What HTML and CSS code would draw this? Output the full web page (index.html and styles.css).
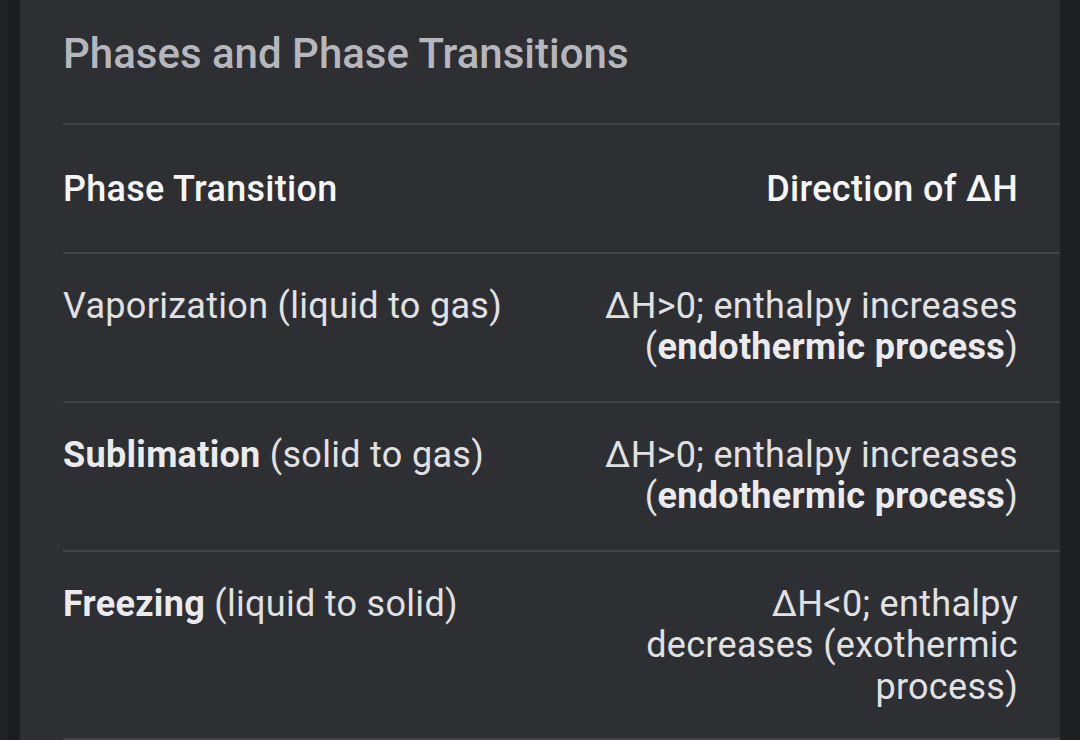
FILE: index.html
```html
<!DOCTYPE html>
<html>
<head>
<meta charset="utf-8">
<link rel="stylesheet" href="styles.css">
</head>
<body>
<div class="page">
  <div class="edge"></div>
  <div class="gutter"></div>
  <main class="card">
    <h1 class="title">Phases and Phase Transitions</h1>
    <div class="table">
      <div class="row head">
        <div class="cell left">Phase Transition</div>
        <div class="cell right">Direction of ΔH</div>
      </div>
      <div class="row">
        <div class="cell left">Vaporization (liquid to gas)</div>
        <div class="cell right">ΔH&gt;0; enthalpy increases (<b>endothermic process</b>)</div>
      </div>
      <div class="row">
        <div class="cell left"><b>Sublimation</b> (solid to gas)</div>
        <div class="cell right">ΔH&gt;0; enthalpy increases (<b>endothermic process</b>)</div>
      </div>
      <div class="row tail">
        <div class="cell left"><b>Freezing</b> (liquid to solid)</div>
        <div class="cell right">ΔH&lt;0; enthalpy decreases (exothermic process)</div>
      </div>
      <div class="row last"></div>
    </div>
  </main>
  <div class="rest"></div>
</div>
</body>
</html>
```

FILE: styles.css
```css
html, body {
  margin: 0;
  padding: 0;
  height: 740px;
  overflow: hidden;
  background: #1e1f21;
  font-family: Roboto, "Noto Sans", sans-serif;
}
.page {
  display: flex;
  height: 740px;
}
.edge {
  width: 8px;
  background: #212225;
}
.gutter {
  width: 12px;
  background: #1b1c1e;
}
.card {
  width: 997px;
  padding-left: 43px;
  background: #2e2f33;
}
.rest {
  flex: 1;
  background: #1e1f21;
}
.title {
  margin: 0 0 44px;
  padding-top: 29px;
  font-size: 42px;
  line-height: 50px;
  font-weight: 500;
  color: #b6b7bc;
}
.table {
  width: 997px;
}
.row {
  display: grid;
  grid-template-columns: 1fr 460px;
  border-top: 2px solid #434448;
  padding: 32px 0 32px;
  font-size: 36px;
  line-height: 41.5px;
  letter-spacing: 0.3px;
  color: #e1e1e3;
}
.row.head {
  padding: 44px 0 41px;
  font-weight: 500;
  color: #f6f6f7;
}
.row.tail {
  padding-bottom: 30px;
}
.row b {
  font-weight: 700;
  color: #ebebed;
}
.cell.right {
  text-align: right;
  padding-right: 42px;
}
.row.last {
  padding: 0;
}
```
